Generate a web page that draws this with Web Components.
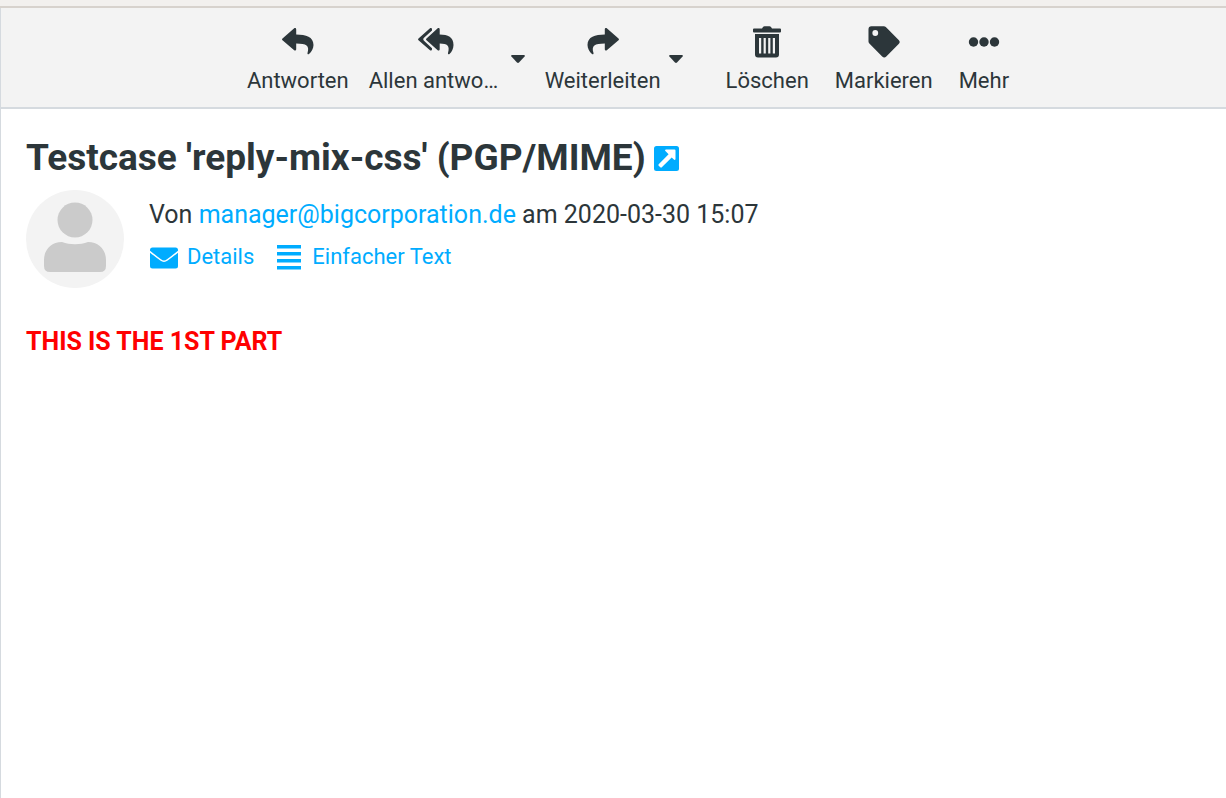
<!DOCTYPE html>
<html lang="de">
<head>
<meta charset="utf-8">
<title>Testcase 'reply-mix-css' (PGP/MIME)</title>
<style>
  html, body { height: 100%; }
  body { margin: 0; background: #fff; color: #2c363a; font: 24px/32px Roboto, sans-serif; }
</style>
</head>
<body>
<mail-app>
  <mail-toolbar slot="toolbar">
    <tool-button icon="reply">Antworten</tool-button>
    <tool-button icon="reply-all" menu>Allen antwo…</tool-button>
    <tool-button icon="forward" menu>Weiterleiten</tool-button>
    <tool-separator></tool-separator>
    <tool-button icon="trash" wide>Löschen</tool-button>
    <tool-button icon="tag" wide>Markieren</tool-button>
    <tool-button icon="more" wide>Mehr</tool-button>
  </mail-toolbar>
  <message-header>
    <span slot="subject">Testcase 'reply-mix-css' (PGP/MIME)</span>
    <message-sender slot="sender" address="manager@bigcorporation.de" date="2020-03-30 15:07"></message-sender>
    <header-link slot="links" icon="mail">Details</header-link>
    <header-link slot="links" icon="lines">Einfacher Text</header-link>
  </message-header>
  <message-body>THIS IS THE 1ST PART</message-body>
</mail-app>
<script>
// Each icon is a pair: the view box and the shapes drawn in it.
const REPLY = '<path d="M.5 12.400 12.200 2.200c.8-.7 2-.1 2 1V8.500C24 8.600 31.500 10.800 31.500 19c0 3.500-2 7-4.500 9-.8.600-1.800 0-1.500-1 2.300-7.500-1-9.500-11.300-9.600v5.900c0 1.100-1.200 1.700-2 1L.5 14.200c-.6-.5-.6-1.300 0-1.800z"/>';
const ICONS = {
  reply: ['0 0 32 32', REPLY],
  forward: ['0 0 32 32', `<g transform="matrix(-1 0 0 1 32 0)">${REPLY}</g>`],
  'reply-all': ['0 0 36 32', '<path d="M8.500 12.400 19.700 2.200c.8-.7 2-.1 2 1V8.500C30 8.600 35.500 11 35.500 19c0 3.500-1.600 7-4 9-.8.600-1.800 0-1.500-1 2.100-7.500-.6-9.500-8.300-9.600v5.900c0 1.100-1.200 1.700-2 1L8.500 14.200c-.6-.5-.6-1.300 0-1.800z"/><path d="M.5 12.400 12 2.200c.8-.7 2-.1 2 1v1.200L6 11.800c-1 .9-1 2.100 0 3l8 7.400v1.100c0 1.100-1.200 1.700-2 1L.5 14.200c-.6-.5-.6-1.300 0-1.800z"/>'],
  trash: ['0 0 32 32', '<path fill-rule="evenodd" d="M4 8h24v20.500a3 3 0 0 1-3 3H7a3 3 0 0 1-3-3zM8 12v15.500h2.200V12zm4.600 0v15.500h2.200V12zm4.600 0v15.500h2.200V12zm4.600 0v15.500H24V12z"/><path d="M3 2.500h8L12 1a2 2 0 0 1 1.500-.7h5A2 2 0 0 1 20 1l1 1.500h8a1 1 0 0 1 1 1v2a1 1 0 0 1-1 1H3a1 1 0 0 1-1-1v-2a1 1 0 0 1 1-1z"/>'],
  tag: ['-8 -4 528 528', '<path fill-rule="evenodd" d="M0 252V48A48 48 0 0 1 48 0h204a48 48 0 0 1 34 14l212 212a48 48 0 0 1 0 68L294 498a48 48 0 0 1-68 0L14 286A48 48 0 0 1 0 252zM112 64a48 48 0 1 0 0 96 48 48 0 1 0 0-96z"/>'],
  more: ['0 0 32 32', '<circle cx="5.500" cy="16" r="4.700"/><circle cx="16" cy="16" r="4.700"/><circle cx="26.500" cy="16" r="4.700"/>'],
  mail: ['0 0 30 30', '<path d="M1 7a2.500 2.500 0 0 1 2.500-2.500h23A2.500 2.500 0 0 1 29 7v.7C25 11 21.500 13.500 18 16.200c-2 1.600-4 1.600-6 0C8.500 13.500 5 11 1 7.700z"/><path d="M1 9.700C5 12.900 8.300 15.200 11.300 17.600c2.400 1.900 5 1.900 7.400 0C21.700 15.200 25 12.900 29 9.700V23a2.500 2.500 0 0 1-2.500 2.500h-23A2.500 2.500 0 0 1 1 23z"/>'],
  lines: ['0 0 30 30', '<path d="M3 2h24v3.500H3zM3 9h24v3.500H3zM3 16h24v3.500H3zM3 23h24v3.500H3z"/>'],
  external: ['0 0 25 25', '<rect width="25" height="25" rx="2.500"/><path fill="#fff" d="M12 3.500h8.500a1 1 0 0 1 1 1V13c0 .9-1 1.200-1.600.6l-2.200-2.200-9.900 9.900c-.5.500-1 .5-1.500 0l-1.600-1.600c-.5-.5-.5-1 0-1.500l9.900-9.900-3.200-3.200c-.6-.6-.3-1.600.6-1.600z"/>']
};
const svg = name => `<svg viewBox="${ICONS[name][0]}" aria-hidden="true">${ICONS[name][1]}</svg>`;

function define(name, render) {
  customElements.define(name, class extends HTMLElement {
    constructor() {
      super();
      this.attachShadow({ mode: 'open' });
    }
    connectedCallback() {
      this.shadowRoot.innerHTML = render(this);
    }
  });
}

define('mail-app', () => `
  <style>
    :host { display: flex; flex-direction: column; min-height: 100%; }
    .strip { height: 6px; background: #f2f0ee; border-bottom: 2px solid #d7d2cd; }
    main { flex: 1; border-left: 1px solid #d5dadf; }
  </style>
  <div class="strip"></div>
  <main><slot name="toolbar"></slot><slot></slot></main>`);

define('mail-toolbar', () => `
  <style>
    :host { display: block; background: #f3f3f3; border-bottom: 2px solid #d5dadf; }
    nav { display: flex; justify-content: center; padding: 18px 0 12px 32px; }
  </style>
  <nav aria-label="Nachricht"><slot></slot></nav>`);

define('tool-separator', () => `<style>:host { display: block; width: 20px; }</style>`);

define('tool-button', el => `
  <style>
    :host { display: flex; }
    button { border: 0; padding: 0; margin: 0; background: none; color: inherit; font: inherit; cursor: pointer; }
    .main { display: flex; flex-direction: column; align-items: center; gap: 9px;
            padding: 0 10px; font-size: 22px; line-height: 28px; }
    :host([wide]) .main { padding: 0 13px; }
    :host([menu]) .main { padding-right: 8px; }
    .main svg { display: block; height: 32px; width: 36px; fill: currentColor; }
    :host([icon="reply-all"]) .label { min-width: 134px; text-align: left; }
    .menu { display: flex; align-items: center; padding: 0 10px 0 0; height: 66px; }
    .menu svg { width: 14px; height: 8px; fill: currentColor; }
  </style>
  <button class="main" type="button">${svg(el.getAttribute('icon'))}<span class="label"><slot></slot></span></button>
  ${el.hasAttribute('menu') ? '<button class="menu" type="button" aria-label="Optionen"><svg viewBox="0 0 14 8"><path d="M1 0h12c1 0 1 1 .6 1.600L8 7.500c-.6.600-1.400.600-2 0L.4 1.600C0 1 0 0 1 0z"/></svg></button>' : ''}`);

define('message-header', () => `
  <style>
    :host { display: block; padding: 28px 25px 0; }
    h1 { display: flex; align-items: center; gap: 8px; margin: 0 0 12px; font-size: 37px; line-height: 41px; font-weight: 700; }
    h1 a { display: flex; color: #00acff; padding-top: 2px; }
    h1 svg { width: 25px; height: 25px; fill: currentColor; }
    .row { display: flex; gap: 25px; }
    .avatar { width: 98px; height: 98px; flex: none; }
    .info { padding-top: 9px; }
    .links { display: flex; gap: 20px; margin-top: 12px; }
  </style>
  <h1><slot name="subject"></slot><a href="#open" aria-label="In neuem Fenster öffnen">${svg('external')}</a></h1>
  <div class="row">
    <svg class="avatar" viewBox="0 0 98 98" aria-hidden="true">
      <circle cx="49" cy="49" r="49" fill="#f3f3f3"/>
      <circle cx="49" cy="30" r="17.500" fill="#cbcbcb"/>
      <path fill="#cbcbcb" d="M36 52c8 3 18 3 26 0 11 0 18 8 18 18v6q0 6-6 6H24q-6 0-6-6v-6c0-10 7-18 18-18z"/>
    </svg>
    <div class="info"><slot name="sender"></slot><div class="links"><slot name="links"></slot></div></div>
  </div>`);

define('message-sender', el => `
  <style>
    :host { display: block; font-size: 25px; line-height: 32px; }
    a { color: #00acff; text-decoration: none; }
  </style>
  Von <a href="mailto:${el.getAttribute('address')}">${el.getAttribute('address')}</a> am ${el.getAttribute('date')}`);

define('header-link', el => `
  <style>
    :host { display: block; font-size: 22px; line-height: 28px; }
    a { display: flex; align-items: start; gap: 8px; color: #00acff; text-decoration: none; }
    svg { width: 30px; height: 30px; fill: currentColor; }
  </style>
  <a href="#${el.getAttribute('icon')}">${svg(el.getAttribute('icon'))}<slot></slot></a>`);

define('message-body', () => `
  <style>
    :host { display: block; padding: 38px 25px; color: #f00; font-size: 25px; line-height: 32px; font-weight: 700; }
  </style>
  <slot></slot>`);
</script>
</body>
</html>
